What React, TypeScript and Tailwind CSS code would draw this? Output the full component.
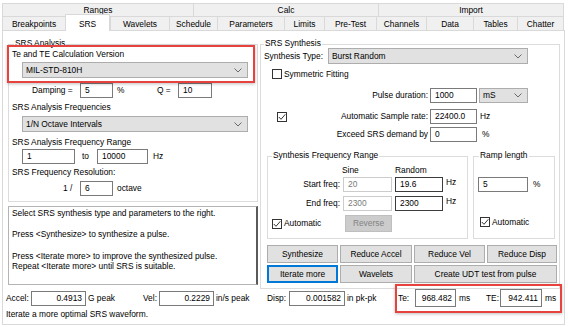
import React from 'react';

type FieldProps = {
  className?: string;
  value: string;
  right?: boolean;
  disabled?: boolean;
  dark?: boolean;
};

function Chevron() {
  return (
    <svg width="8" height="5" viewBox="0 0 8 5" className="shrink-0" aria-hidden="true">
      <path d="M0.5 0.5L4 4L7.5 0.5" fill="none" stroke="#6a6a6a" strokeWidth="1" />
    </svg>
  );
}

function Select({ className, value }: { className: string; value: string }) {
  return (
    <div
      className={`flex items-center justify-between border border-[#adadad] bg-[#e1e1e1] pl-[3px] pr-[5px] ${className}`}
    >
      <span>{value}</span>
      <Chevron />
    </div>
  );
}

function Field({ className = '', value, right, disabled, dark }: FieldProps) {
  const tone = dark
    ? 'border-[#3c3c3c]'
    : disabled
      ? 'border-[#cccccc] text-[#7a7a7a]'
      : 'border-[#7a7a7a]';
  return (
    <div
      className={`flex items-center border bg-white ${tone} ${right ? 'justify-end pr-[3px]' : 'pl-[4px]'} ${className}`}
    >
      {value}
    </div>
  );
}

function Check({ checked }: { checked?: boolean }) {
  return (
    <div className="flex h-[10px] w-[10px] shrink-0 items-center justify-center border border-[#333333] bg-white">
      {checked && (
        <svg width="8" height="8" viewBox="0 0 8 8" aria-hidden="true">
          <path d="M0.8 4L3 6.3L7.3 1.3" fill="none" stroke="#333333" strokeWidth="1" />
        </svg>
      )}
    </div>
  );
}

function Btn({
  className,
  label,
  primary,
  disabled,
}: {
  className: string;
  label: string;
  primary?: boolean;
  disabled?: boolean;
}) {
  const tone = disabled
    ? 'border-[#bfbfbf] bg-[#cccccc] text-[#838383]'
    : primary
      ? 'border-[#0078d7] bg-[#e1e1e1] shadow-[inset_0_0_0_1px_#0078d7]'
      : 'border-[#adadad] bg-[#e1e1e1]';
  return (
    <div className={`flex items-center justify-center border ${tone} ${className}`}>{label}</div>
  );
}

function Group({
  label,
  labelLeft,
  className,
  children,
}: {
  label: string;
  labelLeft: string;
  className: string;
  children: React.ReactNode;
}) {
  return (
    <div className={`relative border border-[#dcdcdc] ${className}`}>
      <span className={`absolute top-[-7px] bg-white px-[1px] leading-[11px] ${labelLeft}`}>
        {label}
      </span>
      {children}
    </div>
  );
}

const topTabs = [
  { label: 'Ranges', w: 'w-[191px]' },
  { label: 'Calc', w: 'w-[185px]' },
  { label: 'Import', w: 'w-[186px] border-r' },
];

const tabs = [
  { label: 'Breakpoints', w: 'w-[63px]' },
  { label: 'SRS', w: 'w-[45px]', active: true },
  { label: 'Wavelets', w: 'w-[59px]' },
  { label: 'Schedule', w: 'w-[48px]' },
  { label: 'Parameters', w: 'w-[67px]' },
  { label: 'Limits', w: 'w-[40px]' },
  { label: 'Pre-Test', w: 'w-[52px]' },
  { label: 'Channels', w: 'w-[50px]' },
  { label: 'Data', w: 'w-[47px]' },
  { label: 'Tables', w: 'w-[44px]' },
  { label: 'Chatter', w: 'w-[47px] border-r' },
];

export default function App() {
  return (
    <div className="relative h-[327px] w-[568px] overflow-hidden bg-white font-['Liberation_Sans',Arial,sans-serif] text-[8.4px] leading-[11px] text-black">
      {/* Tab strip */}
      <div className="flex pl-[2px] pt-[3px]">
        {topTabs.map((t) => (
          <div
            key={t.label}
            className={`flex h-[13px] items-center justify-center border-l border-t border-[#d9d9d9] bg-[#f0f0f0] ${t.w}`}
          >
            {t.label}
          </div>
        ))}
      </div>
      <div className="flex h-[14px] items-end pl-[2px]">
        {tabs.map((t) =>
          t.active ? (
            <div
              key={t.label}
              className={`relative top-[1px] z-10 flex h-[17px] items-center justify-center border-x border-t border-[#d9d9d9] bg-white pt-[2px] ${t.w}`}
            >
              {t.label}
            </div>
          ) : (
            <div
              key={t.label}
              className={`flex h-[14px] items-center justify-center border-l border-t border-[#d9d9d9] bg-[#f0f0f0] pt-[1px] ${t.w}`}
            >
              {t.label}
            </div>
          ),
        )}
      </div>

      {/* Page */}
      <div className="ml-[2px] h-[295px] w-[563px] border border-[#d9d9d9] bg-white">
        <div className="flex">
          {/* Left column */}
          <div className="ml-[5px] w-[250px]">
            <Group label="SRS Analysis" labelLeft="left-[5px]" className="mt-[13px] h-[158px] pt-[4px]">
              <div className="h-[11px] pl-[3px]">Te and TE Calculation Version</div>
              <Select className="ml-[13px] mt-[2px] h-[16px] w-[226px]" value="MIL-STD-810H" />
              <div className="mt-[5px] flex h-[15px] items-center">
                <span className="ml-[23px] w-[48px]">Damping =</span>
                <Field className="h-full w-[33px]" value="5" />
                <span className="ml-[4px] w-[40px]">%</span>
                <span className="w-[21px]">Q =</span>
                <Field className="h-full w-[34px]" value="10" />
              </div>
              <div className="mt-[4px] h-[11px] pl-[3px]">SRS Analysis Frequencies</div>
              <Select className="ml-[13px] mt-[3px] h-[16px] w-[226px]" value="1/N Octave Intervals" />
              <div className="mt-[5px] h-[11px] pl-[3px]">SRS Analysis Frequency Range</div>
              <div className="mt-[1px] flex h-[15px] items-center">
                <Field className="ml-[13px] h-full w-[53px]" value="1" />
                <span className="ml-[7px] w-[15px]">to</span>
                <Field className="h-full w-[51px]" value="10000" />
                <span className="ml-[5px]">Hz</span>
              </div>
              <div className="mt-[3px] h-[11px] pl-[3px]">SRS Frequency Resolution:</div>
              <div className="mt-[3px] flex h-[15px] items-center">
                <span className="ml-[54px] w-[17px]">1 /</span>
                <Field className="h-full w-[33px]" value="6" />
                <span className="ml-[4px]">octave</span>
              </div>
            </Group>

            <div className="mt-[4px] h-[79px] border border-[#b4b4b4] border-r-2 border-r-[#5a5a5a] pl-[3px] pt-[1px] leading-[10.7px]">
              <p>Select SRS synthesis type and parameters to the right.</p>
              <p className="mt-[10.7px]">Press &lt;Synthesize&gt; to synthesize a pulse.</p>
              <p className="mt-[10.7px]">Press &lt;Iterate more&gt; to improve the synthesized pulse.</p>
              <p>Repeat &lt;Iterate more&gt; until SRS is suitable.</p>
            </div>
          </div>

          {/* Right column */}
          <Group label="SRS Synthesis" labelLeft="left-[3px]" className="ml-[2px] mt-[13px] h-[245px] w-[300px]">
            <div className="mt-[3px] flex h-[16px] items-center">
              <span className="ml-[3px] w-[64px]">Synthesis Type:</span>
              <Select className="h-full w-[200px]" value="Burst Random" />
            </div>
            <div className="mt-[5px] flex h-[10px] items-center">
              <div className="ml-[11px]">
                <Check />
              </div>
              <span className="ml-[2px]">Symmetric Fitting</span>
            </div>
            <div className="mt-[9px] flex h-[15px] items-center">
              <span className="w-[167px] text-right">Pulse duration:</span>
              <Field className="ml-[2px] h-full w-[47px]" value="1000" />
              <Select className="ml-[2px] h-full w-[49px]" value="mS" />
            </div>
            <div className="mt-[6px] flex h-[15px] items-center">
              <div className="ml-[16px]">
                <Check checked />
              </div>
              <span className="w-[141px] text-right">Automatic Sample rate:</span>
              <Field className="ml-[2px] h-full w-[47px]" value="22400.0" />
              <span className="ml-[3px]">Hz</span>
            </div>
            <div className="mt-[3px] flex h-[15px] items-center">
              <span className="w-[167px] text-right">Exceed SRS demand by</span>
              <Field className="ml-[2px] h-full w-[47px]" value="0" />
              <span className="ml-[5px]">%</span>
            </div>

            <div className="mt-[14px] flex">
              <Group label="Synthesis Frequency Range" labelLeft="left-[4px]" className="ml-[6px] h-[83px] w-[201px]">
                <div className="mt-[8px] flex h-[11px]">
                  <span className="ml-[74px] w-[53px]">Sine</span>
                  <span>Random</span>
                </div>
                <div className="mt-[1px] flex h-[15px] items-center">
                  <span className="w-[72px] text-right">Start freq:</span>
                  <Field className="ml-[3px] h-full w-[49px]" value="20" disabled />
                  <Field className="ml-[3px] h-full w-[48px]" value="19.6" dark />
                  <span className="ml-[3px] self-start">Hz</span>
                </div>
                <div className="mt-[4px] flex h-[15px] items-center">
                  <span className="w-[72px] text-right">End freq:</span>
                  <Field className="ml-[3px] h-full w-[49px]" value="2300" disabled />
                  <Field className="ml-[3px] h-full w-[48px]" value="2300" dark />
                  <span className="ml-[3px] self-start">Hz</span>
                </div>
                <div className="mt-[4px] flex h-[17px] items-center">
                  <div className="ml-[4px] flex w-[73px] items-center">
                    <Check checked />
                    <span className="ml-[2px]">Automatic</span>
                  </div>
                  <Btn className="h-full w-[47px]" label="Reverse" disabled />
                </div>
              </Group>

              <Group label="Ramp length" labelLeft="left-[5px]" className="ml-[5px] h-[83px] w-[82px]">
                <div className="mt-[20px] flex h-[15px] items-center">
                  <Field className="ml-[4px] h-full w-[50px]" value="5" />
                  <span className="ml-[5px]">%</span>
                </div>
                <div className="mt-[25px] flex h-[10px] items-center">
                  <div className="ml-[6px]">
                    <Check checked />
                  </div>
                  <span className="ml-[2px]">Automatic</span>
                </div>
              </Group>
            </div>

            <div className="ml-[6px] mt-[6px] flex gap-[2px]">
              <Btn className="h-[18px] w-[71px]" label="Synthesize" />
              <Btn className="h-[18px] w-[72px]" label="Reduce Accel" />
              <Btn className="h-[18px] w-[71px]" label="Reduce Vel" />
              <Btn className="h-[18px] w-[70px]" label="Reduce Disp" />
            </div>
            <div className="ml-[6px] mt-[2px] flex gap-[2px]">
              <Btn className="h-[18px] w-[71px]" label="Iterate more" primary />
              <Btn className="h-[18px] w-[72px]" label="Wavelets" />
              <Btn className="h-[18px] w-[143px]" label="Create UDT test from pulse" />
            </div>
          </Group>
        </div>

        {/* Results row */}
        <div className="flex h-[18px] items-center pl-[3px]">
          <span className="w-[25px]">Accel:</span>
          <Field className="h-[15px] w-[55px]" value="0.4913" right />
          <span className="w-[57px] pl-[2px]">G peak</span>
          <span className="w-[16px]">Vel:</span>
          <Field className="h-[15px] w-[55px]" value="0.2229" right />
          <span className="w-[53px] pl-[2px]">in/s peak</span>
          <span className="w-[22px]">Disp:</span>
          <Field className="h-[15px] w-[56px]" value="0.001582" right />
          <span className="w-[53px] pl-[2px]">in pk-pk</span>
          <span className="w-[17px]">Te:</span>
          <Field className="h-[18px] w-[41px]" value="968.482" right />
          <span className="w-[30px] pl-[3px]">ms</span>
          <span className="w-[14px]">TE:</span>
          <Field className="h-[18px] w-[42px]" value="942.411" right />
          <span className="pl-[3px]">ms</span>
        </div>
        <div className="mt-[2px] h-[11px] pl-[3px]">Iterate a more optimal SRS waveform.</div>
      </div>

      {/* Highlight annotations */}
      <div className="pointer-events-none absolute left-[7px] top-[45px] h-[38px] w-[248px] border-2 border-[#e8423f] shadow-[0_1px_3px_rgba(0,0,0,0.25)]" />
      <div className="pointer-events-none absolute left-[395px] top-[284px] h-[29px] w-[167px] border-2 border-[#e8423f] shadow-[0_1px_3px_rgba(0,0,0,0.25)]" />
    </div>
  );
}
